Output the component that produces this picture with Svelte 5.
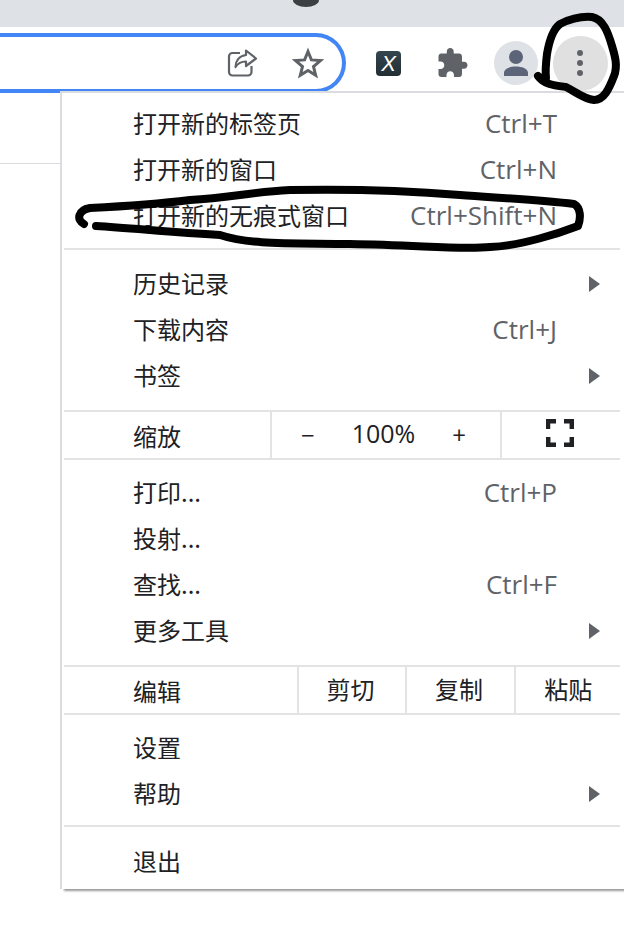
<script>
  const groups = [
    [
      { label: '打开新的标签页', key: 'Ctrl+T' },
      { label: '打开新的窗口', key: 'Ctrl+N' },
      { label: '打开新的无痕式窗口', key: 'Ctrl+Shift+N' }
    ],
    [
      { label: '历史记录', sub: true },
      { label: '下载内容', key: 'Ctrl+J' },
      { label: '书签', sub: true }
    ],
    'zoom',
    [
      { label: '打印...', key: 'Ctrl+P' },
      { label: '投射...' },
      { label: '查找...', key: 'Ctrl+F' },
      { label: '更多工具', sub: true }
    ],
    'edit',
    [
      { label: '设置' },
      { label: '帮助', sub: true }
    ],
    [{ label: '退出' }]
  ];

  // space above / below the separator in front of each group
  const gaps = [null, [11, 9], [13, 0], [0, 8], [13, 0], [0, 8], [10, 10]];
</script>

<div class="screen">
  <div class="tabstrip"><span class="tab-dot"></span></div>

  <div class="toolbar">
    <div class="omnibox">
      <svg class="share" viewBox="0 0 32 32" fill="none" stroke="#5f6368" stroke-width="2.2">
        <path d="M14 6H6.500A3.500 3.500 0 0 0 3 9.500V25a3.500 3.500 0 0 0 3.500 3.500H22a3.500 3.500 0 0 0 3.500-3.500v-6" />
        <path d="M20 3.500 30 11.500 20 19v-4.500c-5 0-8 1.500-10.500 5.500 0-6 3.500-11 10.500-12z" stroke-linejoin="round" />
      </svg>
      <svg class="star" viewBox="0 0 32 32" fill="none" stroke="#5f6368" stroke-width="3">
        <path d="M16 4.500 19.400 12.900 28.500 13.600 21.500 19.500 23.700 28.300 16 23.500 8.300 28.300 10.500 19.500 3.500 13.600 12.600 12.900z" />
      </svg>
    </div>

    <div class="x-ext">X</div>

    <svg class="puzzle" viewBox="2 1 21 21" fill="#5f6368">
      <path d="M20.500 11H19V7c0-1.100-.9-2-2-2h-4V3.500C13 2.120 11.880 1 10.500 1S8 2.120 8 3.500V5H4c-1.100 0-1.990.9-1.990 2v3.800H3.500c1.490 0 2.700 1.210 2.700 2.700s-1.210 2.700-2.700 2.700H2V20c0 1.100.9 2 2 2h3.800v-1.500c0-1.490 1.210-2.700 2.700-2.700 1.490 0 2.700 1.210 2.700 2.700V22H17c1.100 0 2-.9 2-2v-4h1.500c1.380 0 2.500-1.120 2.500-2.500S21.880 11 20.500 11z" />
    </svg>

    <div class="avatar">
      <svg viewBox="0 0 26 28" fill="#5b6478">
        <circle cx="13" cy="8" r="7" />
        <path d="M1 27v-3c0-4.500 6.500-6.500 12-6.500s12 2 12 6.500v3z" />
      </svg>
    </div>

    <div class="kebab">
      <span></span><span></span><span></span>
    </div>
  </div>

  <div class="page-line"></div>

  <div class="menu">
    {#each groups as group, g}
      {#if g > 0}<div class="sep" style="margin-top: {gaps[g][0]}px; margin-bottom: {gaps[g][1]}px"></div>{/if}
      {#if group === 'zoom'}
        <div class="split">
          <div class="split-label">缩放</div>
          <div class="zoom-ctl">
            <span class="zoom-btn">−</span>
            <span class="zoom-val">100%</span>
            <span class="zoom-btn">+</span>
          </div>
          <div class="zoom-full">
            <svg viewBox="0 0 28 28" fill="none" stroke="#202124" stroke-width="4.500">
              <path d="M2 10V2.200H10M18 2.200H25.800V10M25.800 18V25.800H18M10 25.800H2.200V18" />
            </svg>
          </div>
        </div>
      {:else if group === 'edit'}
        <div class="split">
          <div class="split-label edit-label">编辑</div>
          <div class="edit-btn">剪切</div>
          <div class="edit-btn">复制</div>
          <div class="edit-btn">粘贴</div>
        </div>
      {:else}
        <div class="group">
          {#each group as item}
            <div class="item">
              <span class="label">{item.label}</span>
              {#if item.key}<span class="key">{item.key}</span>{/if}
              {#if item.sub}<span class="arrow"></span>{/if}
            </div>
          {/each}
        </div>
      {/if}
    {/each}
  </div>

  <!-- hand-drawn marks over the screenshot -->
  <svg class="marks" viewBox="0 0 624 932" fill="none" stroke="#000" stroke-width="8" stroke-linecap="round" stroke-linejoin="round">
    <path d="M538 76C544 84 552 85 566 87 576 92 584 99 594 100 604 100 609 89 614 76 618 66 615 56 612 46 608 32 603 19 592 17 580 16 568 20 560 24 552 30 549 42 547 54 546 62 545 70 546 78" />
    <path d="M96 226C130 228 170 232 220 235 250 245 290 243 350 244 420 245 460 250 490 247 520 246 560 233 578 226 581 218 581 208 574 204 540 200 500 198 460 195 400 190 340 189 290 190 250 192 230 198 190 200 150 205 110 207 90 208 78 210 76 220 84 224" />
  </svg>
</div>

<style>
  :global(body) {
    margin: 0;
    background: #fff;
  }
  .screen {
    position: relative;
    width: 624px;
    height: 932px;
    overflow: hidden;
    background: #fff;
    font-family: "Noto Sans CJK SC", "Noto Sans", sans-serif;
  }
  .tabstrip {
    height: 27px;
    background: #dee1e6;
    padding-left: 293px;
  }
  .tab-dot {
    display: block;
    width: 26px;
    height: 14px;
    transform: translateY(-7px);
    border-radius: 50%;
    background: #3c4043;
  }
  .toolbar {
    display: flex;
    align-items: center;
    height: 72px;
  }
  .omnibox {
    box-sizing: border-box;
    width: 346px;
    height: 60px;
    margin-top: -1px;
    border: 4px solid #4285f4;
    border-left: 0;
    border-radius: 0 30px 30px 0;
    display: flex;
    align-items: center;
    padding-left: 226px;
    gap: 34px;
  }
  .share {
    width: 32px;
    height: 32px;
  }
  .star {
    width: 32px;
    height: 32px;
  }
  .x-ext {
    width: 25px;
    height: 25px;
    margin-left: 30px;
    border-radius: 4px;
    background: linear-gradient(#34464f, #222e34);
    color: #fff;
    font: italic 22px/25px "Liberation Sans", sans-serif;
    text-align: center;
  }
  .puzzle {
    width: 30px;
    height: 29px;
    margin-left: 37px;
    transform: translateY(-1px);
  }
  .avatar {
    width: 44px;
    height: 44px;
    margin-left: 26px;
    border-radius: 50%;
    background: #dee1e6;
    display: grid;
    place-items: center;
  }
  .avatar svg {
    width: 26px;
    height: 28px;
  }
  .kebab {
    width: 55px;
    height: 55px;
    margin-left: 15px;
    border-radius: 50%;
    background: #e0e0e0;
    display: flex;
    flex-direction: column;
    align-items: center;
    justify-content: center;
    gap: 4px;
    padding-right: 2px;
    box-sizing: border-box;
  }
  .kebab span {
    width: 6px;
    height: 6px;
    border-radius: 50%;
    background: #5f6368;
  }
  .page-line {
    height: 1px;
    width: 60px;
    margin-top: 64px;
    background: #dadce0;
  }
  .menu {
    position: absolute;
    left: 60px;
    top: 91px;
    width: 564px;
    height: 798px;
    box-sizing: border-box;
    background: #fff;
    border-top: 2px solid #dadce0;
    border-left: 2px solid #dadce0;
    box-shadow: 3px 3px 2px -1px rgba(0, 0, 0, 0.4);
    padding: 6px 0 0;
    color: #202124;
    font-size: 24px;
  }
  .item {
    height: 46px;
    display: flex;
    align-items: center;
    padding: 0 67px 0 71px;
    justify-content: space-between;
    position: relative;
  }
  .label {
    white-space: nowrap;
  }
  .key {
    color: #5f6368;
    font-family: "Open Sans", "Noto Sans", sans-serif;
    font-size: 26px;
    margin-top: 2px;
  }
  .arrow {
    position: absolute;
    right: 24px;
    top: 17px;
    width: 0;
    height: 0;
    border-left: 11px solid #5f6368;
    border-top: 8px solid transparent;
    border-bottom: 8px solid transparent;
  }
  .sep {
    height: 2px;
    margin-left: 2px;
    margin-right: 4px;
    background: #e3e3e3;
  }
  .split {
    display: flex;
    align-items: stretch;
    height: 46px;
  }
  .split-label {
    width: 210px;
    box-sizing: border-box;
    padding-left: 71px;
    display: flex;
    align-items: center;
    border-right: 2px solid #e3e3e3;
  }
  .edit-label {
    width: 237px;
  }
  .zoom-ctl {
    width: 230px;
    box-sizing: border-box;
    display: flex;
    align-items: center;
    justify-content: space-between;
    padding: 0 34px 4px 29px;
    border-right: 2px solid #e3e3e3;
    font-family: "Open Sans", "Noto Sans", sans-serif;
  }
  .zoom-btn {
    font-size: 24px;
    margin-top: 3px;
  }
  .zoom-val {
    font-size: 25px;
  }
  .zoom-full {
    flex: 1;
    display: flex;
    align-items: center;
    padding-left: 44px;
  }
  .zoom-full svg {
    width: 28px;
    height: 28px;
    margin-top: -4px;
  }
  .edit-btn {
    width: 108.500px;
    box-sizing: border-box;
    display: flex;
    align-items: center;
    justify-content: center;
    padding: 0 3px 4px 0;
    border-right: 2px solid #e3e3e3;
  }
  .edit-btn:last-child {
    border-right: 0;
  }
  .marks {
    position: absolute;
    left: 0;
    top: 0;
    width: 624px;
    height: 932px;
    pointer-events: none;
  }
</style>
